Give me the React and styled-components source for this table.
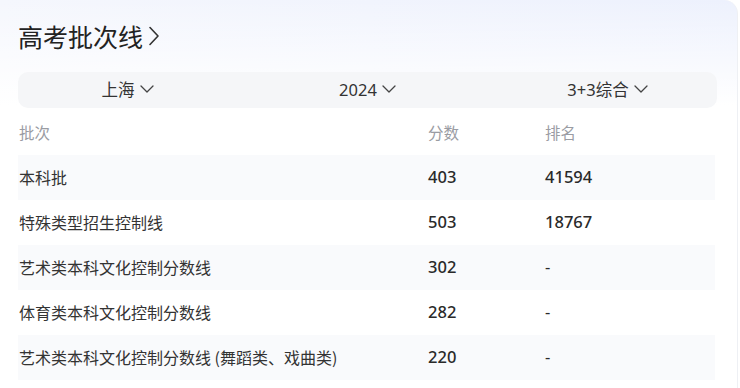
import React from 'react';
import styled, { createGlobalStyle } from 'styled-components';

const GlobalStyle = createGlobalStyle`
  html, body {
    margin: 0;
    padding: 0;
    background: #fff;
  }
  body {
    font-family: "Noto Sans", "Noto Sans CJK SC", sans-serif;
  }
`;

/* Kartu utama dengan gradasi biru tipis di atas */
const Card = styled.div`
  box-sizing: border-box;
  width: 738px;
  height: 388px;
  padding: 18px 20px 0 18px;
  border-right: 1px solid #eef0f4;
  border-top-right-radius: 14px;
  background:
    linear-gradient(180deg, rgba(255, 255, 255, 0) 0, #fff 105px),
    linear-gradient(90deg, #f5f7fd 0%, #edf1fd 100%);
  overflow: hidden;
`;

const Title = styled.h2`
  display: flex;
  align-items: center;
  gap: 5px;
  height: 36px;
  margin: 0;
  font-size: 25px;
  font-weight: 400;
  color: #222;
  font-family: "Noto Sans CJK SC", sans-serif;
`;

const SelectBar = styled.div`
  display: flex;
  height: 36px;
  margin-top: 18px;
  border-radius: 10px;
  background: #f5f6f8;
`;

const SelectItem = styled.div`
  flex: 1;
  display: flex;
  align-items: center;
  justify-content: center;
  gap: 5px;
  padding-bottom: 2px;
  font-size: 16.5px;
  color: #333;
  font-family: "Noto Sans", "Noto Sans CJK SC", sans-serif;
  transform: translateX(${(p) => p.$shift || 0}px);
`;

const Table = styled.div`
  width: 697px;
  margin-top: 2px;
`;

const Row = styled.div`
  display: grid;
  grid-template-columns: 409px 117px 1fr;
  align-items: center;
  height: 45px;
  padding-bottom: 2px;
  box-sizing: border-box;
  background: ${(p) => (p.$striped ? '#f9fafc' : 'transparent')};
  color: ${(p) => (p.$head ? '#9a9ca3' : '#333')};
  font-size: ${(p) => (p.$head ? '15.5px' : '16px')};
`;

const Cell = styled.div`
  padding-left: 1px;
  font-family: "Noto Sans CJK SC", sans-serif;
  white-space: nowrap;
`;

const Num = styled.div`
  padding-left: 1px;
  font-family: "Noto Sans", sans-serif;
  font-weight: ${(p) => (p.$bold ? 500 : 400)};
  font-size: 16.5px;
  color: #2a2a2a;
`;

const ArrowRight = () => (
  <svg width="12" height="20" viewBox="0 0 12 20" fill="none">
    <path d="M2 1.5 L10 10 L2 18.5" stroke="#333" strokeWidth="1.6" strokeLinecap="round" strokeLinejoin="round" />
  </svg>
);

const ArrowDown = () => (
  <svg width="14" height="8" viewBox="0 0 14 8" fill="none">
    <path d="M1 1 L7 7 L13 1" stroke="#444" strokeWidth="1.3" strokeLinecap="round" strokeLinejoin="round" />
  </svg>
);

const rows = [
  { name: '本科批', score: '403', rank: '41594' },
  { name: '特殊类型招生控制线', score: '503', rank: '18767' },
  { name: '艺术类本科文化控制分数线', score: '302', rank: '-' },
  { name: '体育类本科文化控制分数线', score: '282', rank: '-' },
  { name: '艺术类本科文化控制分数线 (舞蹈类、戏曲类)', score: '220', rank: '-' },
];

const App = () => (
  <>
    <GlobalStyle />
    <Card>
      <Title>
        高考批次线
        <ArrowRight />
      </Title>
      <SelectBar>
        <SelectItem $shift={-7}>
          上海 <ArrowDown />
        </SelectItem>
        <SelectItem>
          2024 <ArrowDown />
        </SelectItem>
        <SelectItem $shift={7}>
          3+3综合 <ArrowDown />
        </SelectItem>
      </SelectBar>
      <Table>
        <Row $head>
          <Cell>批次</Cell>
          <Cell>分数</Cell>
          <Cell>排名</Cell>
        </Row>
        {rows.map((r, i) => (
          <Row key={r.name} $striped={i % 2 === 0}>
            <Cell>{r.name}</Cell>
            <Num $bold>{r.score}</Num>
            <Num $bold={r.rank !== '-'}>{r.rank}</Num>
          </Row>
        ))}
      </Table>
    </Card>
  </>
);

export default App;
